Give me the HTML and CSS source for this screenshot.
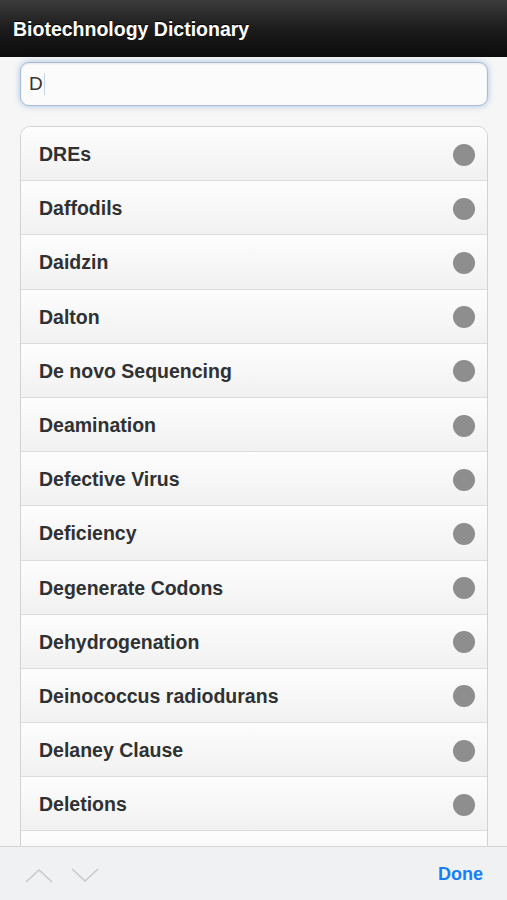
FILE: index.html
```html
<!DOCTYPE html>
<html lang="en">
  <head>
    <meta charset="UTF-8" />
    <meta name="viewport" content="width=device-width, initial-scale=1.0" />
    <title>Biotechnology Dictionary</title>
    <link rel="stylesheet" href="styles.css">
  </head>
  <body>
    <div class="header">
      <h1>Biotechnology Dictionary</h1>
    </div>

    <div class="content">
      <div class="search">
        <span class="search-text">D</span><span class="caret"></span>
      </div>

      <ul class="list">
        <li><span>DREs</span><i class="dot"></i></li>
        <li><span>Daffodils</span><i class="dot"></i></li>
        <li><span>Daidzin</span><i class="dot"></i></li>
        <li><span>Dalton</span><i class="dot"></i></li>
        <li><span>De novo Sequencing</span><i class="dot"></i></li>
        <li><span>Deamination</span><i class="dot"></i></li>
        <li><span>Defective Virus</span><i class="dot"></i></li>
        <li><span>Deficiency</span><i class="dot"></i></li>
        <li><span>Degenerate Codons</span><i class="dot"></i></li>
        <li><span>Dehydrogenation</span><i class="dot"></i></li>
        <li><span>Deinococcus radiodurans</span><i class="dot"></i></li>
        <li><span>Delaney Clause</span><i class="dot"></i></li>
        <li><span>Deletions</span><i class="dot"></i></li>
        <li><span>Denaturation</span><i class="dot"></i></li>
      </ul>
    </div>

    <div class="toolbar">
      <div class="arrows">
        <svg width="28" height="16" viewBox="0 0 28 16">
          <polyline points="1,15 14,3 27,15" fill="none" stroke="#c8c9cc" stroke-width="1.6" />
        </svg>
        <svg width="28" height="16" viewBox="0 0 28 16">
          <polyline points="1,2 14,14 27,2" fill="none" stroke="#c8c9cc" stroke-width="1.6" />
        </svg>
      </div>
      <span class="done">Done</span>
    </div>
  </body>
</html>
```

FILE: styles.css
```css
body {
  margin: 0;
  font-family: "Liberation Sans", Arial, sans-serif;
  background: #f6f6f6;
  height: 900px;
  overflow: hidden;
}
.header {
  height: 57px;
  background: linear-gradient(#3c3c3c, #1c1c1c 50%, #0c0c0c);
  display: flex;
  align-items: center;
  padding: 2px 13px 0;
  box-sizing: border-box;
}
.header h1 {
  margin: 0;
  color: #fff;
  font-size: 19.5px;
  font-weight: bold;
  text-shadow: 0 -1px 0 #000;
}
.content {
  padding: 5px 19px 0 20px;
}
.search {
  height: 44px;
  border: 1px solid #a9bcd6;
  border-radius: 9px;
  background: #fbfbfb;
  box-shadow: 0 0 6px rgba(90, 140, 210, 0.5), inset 0 1px 2px rgba(0, 0, 0, 0.08);
  display: flex;
  align-items: center;
  padding: 0 8px;
  box-sizing: border-box;
}
.search-text {
  font-size: 19px;
  color: #333;
}
.caret {
  width: 1px;
  height: 22px;
  background: #c9d4e6;
  margin-left: 1px;
}
.list {
  list-style: none;
  margin: 20px 0 0;
  padding: 0;
  border: 1px solid #d2d2d2;
  border-radius: 10px;
  overflow: hidden;
  background: #fff;
}
.list li {
  height: 54.2px;
  border-bottom: 1px solid #dcdcdc;
  background: linear-gradient(#fdfdfd, #f1f1f1);
  display: flex;
  align-items: center;
  justify-content: space-between;
  padding: 2px 12px 0 18px;
  box-sizing: border-box;
}
.list li span {
  font-size: 19.5px;
  font-weight: bold;
  color: #2f3133;
}
.dot {
  width: 22px;
  height: 22px;
  border-radius: 50%;
  background: #8e8e8e;
}
.toolbar {
  position: fixed;
  left: 0;
  right: 0;
  bottom: 0;
  height: 53px;
  background: #f0f1f3;
  border-top: 1px solid #d4d5d8;
  display: flex;
  align-items: center;
  justify-content: space-between;
  padding: 0 24px 0 25px;
}
.arrows {
  display: flex;
  gap: 18px;
  margin-top: 2px;
}
.done {
  color: #157efb;
  font-size: 18px;
  font-weight: bold;
  margin-top: 2px;
}
```
